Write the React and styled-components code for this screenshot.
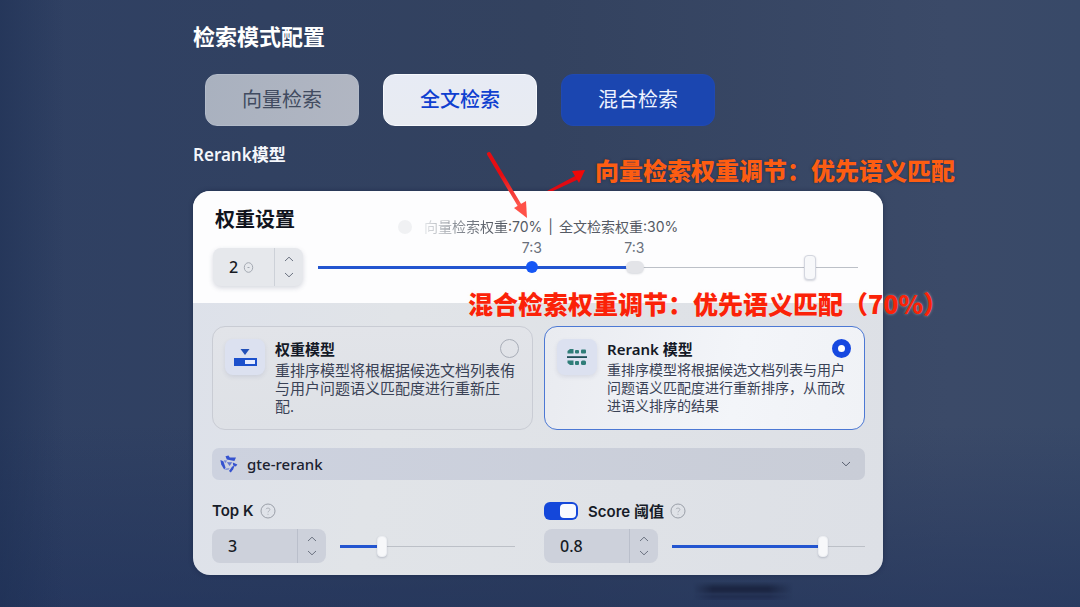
import React, { useState } from "react";
import styled, { createGlobalStyle, css } from "styled-components";

const GlobalStyle = createGlobalStyle`
  *, *::before, *::after { box-sizing: border-box; }
  body {
    margin: 0;
    min-height: 100vh;
    font-family: "Noto Sans", "Noto Sans CJK SC", sans-serif;
    color: #161c2b;
    background:
      linear-gradient(90deg, rgba(28, 46, 82, 0.5) 0, rgba(28, 46, 82, 0) 6%),
      linear-gradient(0deg, rgba(30, 48, 90, 0.55) 0, rgba(30, 48, 90, 0) 30%),
      linear-gradient(90deg, #2f4063 0%, #33425f 50%, #3b4a68 88%, #384968 100%);
  }
  button, input, select { font: inherit; color: inherit; margin: 0; }
  button { cursor: pointer; }
`;

const Page = styled.main`
  position: relative;
  min-height: 100vh;
  padding: 20px 197px 32px 193px;
`;

const PageTitle = styled.h1`
  margin: 0;
  font-size: 22px;
  line-height: 32px;
  font-weight: 700;
  color: #fff;
`;

const Tabs = styled.div`
  display: flex;
  gap: 24px;
  margin-top: 22px;
  padding-left: 12px;
`;

const tabLook = {
  muted: css`background: linear-gradient(100deg, #a9b1bf, #b1b6c2); color: #414b60; border-color: #b3bbc9;`,
  light: css`background: linear-gradient(180deg, #e7ebf5, #e8ebf1); color: #0f3fd0; border-color: #f6f8fc; font-weight: 500;`,
  primary: css`background: #1b46b0; color: #eef3ff; border-color: #2049b2;`,
};

const Tab = styled.button`
  width: 154px;
  height: 52px;
  padding: 0;
  border: 1px solid;
  border-radius: 12px;
  font-size: 20px;
  line-height: 28px;
  ${({ $look }) => tabLook[$look]}
`;

const SubTitle = styled.h2`
  margin: 16px 0 0;
  font-size: 17px;
  line-height: 26px;
  font-weight: 600;
  color: #f4f6fb;
`;

const Card = styled.section`
  position: relative;
  margin-top: 23px;
  border-radius: 17px;
  background: linear-gradient(100deg, #dde1ea 0%, #e1e4e8 30%, #dde0e6 100%);
  box-shadow: 0 0 4px rgba(18, 30, 60, 0.5);
`;

const Head = styled.div`
  display: grid;
  grid-template-columns: 90px 1fr;
  column-gap: 15px;
  padding: 12px 25px 17px 20px;
  border-radius: 17px 17px 0 0;
  background: #fdfdfe;
`;

const HeadLeft = styled.div`
  display: flex;
  flex-direction: column;
  gap: 11px;
`;

const CardTitle = styled.h3`
  margin: 0 0 0 2px;
  font-size: 20px;
  line-height: 34px;
  font-weight: 700;
  color: #10141d;
  white-space: nowrap;
`;

const HeadRight = styled.div`
  padding-top: 14px;
`;

const Caption = styled.p`
  display: flex;
  align-items: center;
  gap: 12px;
  margin: 0;
  padding-left: 80px;
  font-family: Inter, "Noto Sans CJK SC", sans-serif;
  font-size: 14px;
  line-height: 20px;
  color: #555a64;
  white-space: nowrap;

  &::before {
    content: "";
    width: 14px;
    height: 14px;
    border-radius: 50%;
    background: #f0f1f3;
  }
`;

const Faded = styled.span`
  color: transparent;
  background: linear-gradient(90deg, #e3e5e8 0, #8b9098 32px, #555a64 70px);
  background-clip: text;
`;

const Divider = styled.span`
  margin: 0 6px;
`;

const RatioTrack = styled.div`
  position: relative;
  display: flex;
  padding-top: 17px;
`;

const Mark = styled.span`
  position: absolute;
  top: 0;
  left: ${({ $at }) => $at}%;
  display: flex;
  flex-direction: column;
  align-items: center;
  gap: 2px;
  transform: translateX(-50%);
  font-family: Inter, sans-serif;
  font-size: 14px;
  line-height: 22px;
  color: #6a707b;

  &::after {
    content: "";
    width: ${({ $active }) => ($active ? 12 : 18)}px;
    height: 12px;
    border-radius: 6px;
    background: ${({ $active }) => ($active ? "#1657f5" : "#e3e4e8")};
    box-shadow: ${({ $active }) => ($active ? "none" : "0 1px 2px rgba(60, 70, 90, 0.2)")};
  }
`;

const thumb = css`
  width: ${({ $tall }) => ($tall ? 12 : 10)}px;
  height: ${({ $tall }) => ($tall ? 25 : 21)}px;
  border: 1px solid ${({ $tall }) => ($tall ? "#d3d6df" : "#eceef2")};
  border-radius: 4px;
  background: #f7f8fa;
  box-shadow: 0 1px 2px rgba(40, 50, 80, 0.2);
`;

const Range = styled.input`
  appearance: none;
  flex: 1;
  min-width: 0;
  width: 100%;
  height: 26px;
  background:
    linear-gradient(#2355d0, #2355d0) left center / ${({ $fill }) => $fill}% 3px no-repeat,
    linear-gradient(#bcc0c7, #bcc0c7) left center / 100% 1px no-repeat;

  &::-webkit-slider-thumb { appearance: none; ${thumb} }
  &::-moz-range-thumb { ${thumb} }
`;

const StepperBox = styled.div`
  display: flex;
  align-items: center;
  flex: none;
  width: ${({ $small }) => ($small ? 90 : 114)}px;
  height: ${({ $small }) => ($small ? 38 : 34)}px;
  border-radius: 8px;
  background: ${({ $small }) => ($small ? "#e6e8ec" : "#cdd1db")};
  box-shadow: ${({ $small }) => ($small ? "0 2px 5px rgba(60, 70, 100, 0.2)" : "none")};
  overflow: hidden;
`;

const NumberInput = styled.input`
  appearance: textfield;
  flex: ${({ $small }) => ($small ? "none" : "1")};
  width: ${({ $small }) => ($small ? 30 : 60)}px;
  min-width: 0;
  height: 100%;
  padding: 0 0 0 16px;
  border: 0;
  background: transparent;
  font-size: 16px;
  font-weight: 500;
  color: #171b24;

  &::-webkit-inner-spin-button,
  &::-webkit-outer-spin-button { appearance: none; margin: 0; }
`;

const Arrows = styled.div`
  display: flex;
  flex-direction: column;
  width: 29px;
  height: 100%;
  margin-left: auto;
  padding: 3px 0;
  border-left: 1px solid rgba(120, 128, 145, 0.22);
`;

const ArrowButton = styled.button`
  display: grid;
  place-items: center;
  flex: 1;
  padding: 0;
  border: 0;
  background: transparent;
  color: #6b7280;
`;

const Body = styled.div`
  padding: 23px 18px 12px 19px;
`;

const Models = styled.div`
  display: grid;
  grid-template-columns: 1fr 1fr;
  gap: 11px;
`;

const ModelCard = styled.label`
  display: flex;
  gap: 10px;
  height: 104px;
  padding: 12px 13px 0 12px;
  border: 1px solid ${({ $on }) => ($on ? "#4c78d4" : "#c9ccd4")};
  border-radius: 13px;
  background: ${({ $on }) =>
    $on ? "linear-gradient(100deg, #e9ebf0, #f3f5f9 60%, #f0f2f6)" : "linear-gradient(180deg, #e2e4e9, #dee1e6)"};
  cursor: pointer;
`;

const IconTile = styled.span`
  display: grid;
  place-items: center;
  flex: none;
  width: 40px;
  height: 36px;
  border-radius: 8px;
  background: #dce1f0;
  box-shadow: 0 2px 4px rgba(70, 80, 130, 0.12);
`;

const ModelText = styled.span`
  flex: 1;
  min-width: 0;
`;

const ModelHead = styled.span`
  display: flex;
  align-items: center;
  justify-content: space-between;
  height: 19px;
  font-size: 15px;
  font-weight: 600;
  color: #141926;
`;

const Radio = styled.input`
  appearance: none;
  width: 19px;
  height: 19px;
  border: 1px solid #a9aeb8;
  border-radius: 50%;
  background: transparent;

  &:checked { border: 6px solid #1648e0; background: #fff; }
`;

const ModelDesc = styled.span`
  display: block;
  margin-top: 3px;
  font-size: ${({ $size }) => $size}px;
  line-height: 18px;
  color: #3a4256;
  white-space: pre;
`;

const SelectWrap = styled.div`
  position: relative;
  margin-top: 18px;
`;

const SelectBox = styled.select`
  appearance: none;
  display: block;
  width: 100%;
  height: 32px;
  padding: 0 35px;
  border: 0;
  border-radius: 7px;
  background: linear-gradient(90deg, #cdd2df, #c9cdd7);
  font-size: 15px;
  font-weight: 500;
  color: #1c2230;
`;

const SelectIcon = styled.span`
  position: absolute;
  top: 0;
  bottom: 0;
  ${({ $end }) => ($end ? "right: 14px; color: #596070;" : "left: 8px;")}
  display: flex;
  align-items: center;
  pointer-events: none;
`;

const Fields = styled.div`
  display: grid;
  grid-template-columns: 1fr 1fr;
  gap: 11px;
  margin-top: 21px;
`;

const Field = styled.div`
  padding-right: ${({ $inset }) => ($inset ? 18 : 0)}px;
`;

const FieldHead = styled.div`
  display: flex;
  align-items: center;
  gap: 6px;
  height: 19px;
  color: #9a9fa8;
`;

const FieldLabel = styled.label`
  font-family: Inter, "Noto Sans CJK SC", sans-serif;
  font-size: 15px;
  font-weight: 600;
  color: #171c28;
`;

const FieldRow = styled.div`
  display: flex;
  align-items: center;
  gap: 14px;
  margin-top: 9px;
`;

const Toggle = styled.input`
  appearance: none;
  position: relative;
  width: 34px;
  height: 18px;
  margin-right: 4px;
  border-radius: 6px;
  background: #a4aab8;

  &::after {
    content: "";
    position: absolute;
    top: 2px;
    left: 2px;
    width: 16px;
    height: 14px;
    border-radius: 4px;
    background: #f8faff;
  }
  &:checked { background: #1447da; }
  &:checked::after { left: 16px; }
`;

const Note = styled.p`
  position: absolute;
  margin: 0;
  font-family: "Noto Sans CJK SC", sans-serif;
  font-weight: 900;
  line-height: 34px;
  white-space: nowrap;
  ${({ $tone }) =>
    $tone === "orange"
      ? "left: 402px; top: -38px; font-size: 24px; color: #fd5d12; text-shadow: 0 0 3px rgba(20, 30, 60, 0.6);"
      : "left: 275px; top: 95px; font-size: 25px; color: #fb2208; text-shadow: 0 0 3px rgba(255, 235, 215, 0.5);"}
`;

const ArrowLayer = styled.svg`
  position: absolute;
  left: 290px;
  top: -43px;
  pointer-events: none;
`;

const Smudge = styled.div`
  position: absolute;
  left: 500px;
  top: 391px;
  width: 100px;
  height: 18px;
  background: linear-gradient(180deg, transparent 0, #1a2440 35%, #1e2947 60%, #2d3d63 70%, #16213f 80%, #2d3d63 88%, #182344 100%);
  mask-image: linear-gradient(90deg, transparent, #000 20%, #000 75%, transparent);
  filter: blur(1px);
`;

const Chevron = ({ up }) => (
  <svg width="10" height="6" viewBox="0 0 10 6" fill="none" stroke="currentColor" strokeWidth="1" aria-hidden="true">
    <path d={up ? "M1 5 5 1.2 9 5" : "M1 1 5 4.8 9 1"} />
  </svg>
);

const HelpIcon = () => (
  <svg width="16" height="16" viewBox="0 0 16 16" fill="none" stroke="currentColor" strokeWidth="1" aria-hidden="true">
    <circle cx="8" cy="8" r="7" />
    <path d="M6 6.2c.3-1.6 3.9-1.6 3.9.3 0 1.300-1.900 1.400-1.900 2.900M8 10.800v1" opacity="0.7" />
  </svg>
);

const WeightIcon = () => (
  <svg width="24" height="20" viewBox="0 0 24 20" aria-hidden="true">
    <path d="M7.500 2h9L12 8z" fill="#2250b8" />
    <rect x="1" y="11" width="23" height="8" fill="#1c50cc" />
    <rect x="12" y="13" width="10" height="4" fill="#e6ecff" />
  </svg>
);

const RerankIcon = () => (
  <svg width="20" height="20" viewBox="0 0 20 20" fill="#2f7d78" aria-hidden="true">
    <path d="M.5 6.500V4L3 2h3.500v4.500z" />
    <rect x="8" y="3" width="4" height="3.500" rx="1" />
    <rect x="14" y="2.500" width="5" height="4" rx="1" />
    <rect x="0" y="9.200" width="20" height="1.800" fill="#1f4f58" />
    <path d="M.5 13.500h6V18H3L.5 16z" />
    <rect x="8" y="14" width="4" height="4" rx="1" />
    <rect x="14" y="13.500" width="5" height="4.500" rx="1.500" />
  </svg>
);

const GteIcon = () => (
  <svg width="18" height="18" viewBox="0 0 18 18" fill="#3552cf" aria-hidden="true">
    <path d="M5.500 1.200 8.500.6 9.800 2.400 16 2.600 14.400 6 6.800 4.400z" />
    <path d="M.4 5 3.400 6.200 5.600 12.800 4.200 14.600 1.200 9.500z" />
    <path d="M3.800 5.200 7.200 5.600 5.200 8.200z" opacity="0.6" />
    <path d="M6.800 7.200h5.400L9.600 11z" opacity="0.75" />
    <path d="M12.800 7.400 17.400 9.600 15.800 11.400 13.200 10.600z" />
    <path d="M14.600 10.800 13.200 14.200 10.800 17.400 9 15.900 12.200 11.600z" />
    <path d="M5.600 13.600 9.600 13 8.600 14.800 5.200 15z" opacity="0.5" />
  </svg>
);

function Stepper({ id, label, value, onChange, step = 1, small, children }) {
  const move = (d) => onChange(Number((Number(value) + d * step).toFixed(2)));
  return (
    <StepperBox $small={small}>
      <NumberInput
        id={id}
        type="number"
        step={step}
        aria-label={label}
        value={value}
        $small={small}
        onChange={(e) => onChange(e.target.value)}
      />
      {children}
      <Arrows>
        <ArrowButton type="button" aria-label="增加" onClick={() => move(1)}><Chevron up /></ArrowButton>
        <ArrowButton type="button" aria-label="减少" onClick={() => move(-1)}><Chevron /></ArrowButton>
      </Arrows>
    </StepperBox>
  );
}

const tabs = [
  { name: "向量检索", look: "muted" },
  { name: "全文检索", look: "light" },
  { name: "混合检索", look: "primary" },
];

const models = [
  {
    id: "weight",
    title: "权重模型",
    size: 15,
    icon: <WeightIcon />,
    desc: "重排序模型将根椐据候选文档列表侑\n与用户问题语义匹配度进行重新庄\n配.",
  },
  {
    id: "rerank",
    title: "Rerank 模型",
    size: 14,
    icon: <RerankIcon />,
    desc: "重排序模型将根据候选文档列表与用户\n问题语义匹配度进行重新排序，从而改\n进语义排序的结果",
  },
];

export default function App() {
  const [weight, setWeight] = useState(2);
  const [ratio, setRatio] = useState(92);
  const [model, setModel] = useState("rerank");
  const [topK, setTopK] = useState(3);
  const [score, setScore] = useState(0.8);
  const [scoreOn, setScoreOn] = useState(true);

  return (
    <>
      <GlobalStyle />
      <Page>
        <PageTitle>检索模式配置</PageTitle>
        <Tabs>
          {tabs.map((t) => (
            <Tab key={t.name} type="button" $look={t.look}>{t.name}</Tab>
          ))}
        </Tabs>
        <SubTitle>Rerank模型</SubTitle>

        <Card>
          <Head>
            <HeadLeft>
              <CardTitle>权重设置</CardTitle>
              <Stepper small label="权重" value={weight} onChange={setWeight}>
                <svg width="11" height="11" viewBox="0 0 11 11" fill="none" stroke="#a3a8b1" aria-hidden="true">
                  <ellipse cx="5.500" cy="5.500" rx="4.200" ry="4.800" />
                  <path d="M4.500 5.500h2" />
                </svg>
              </Stepper>
            </HeadLeft>
            <HeadRight>
              <Caption>
                <span>
                  <Faded>向量检索权重</Faded>:70%<Divider>|</Divider>全文检索权重:30%
                </span>
              </Caption>
              <RatioTrack>
                <Range
                  $tall
                  type="range"
                  aria-label="权重比例"
                  value={ratio}
                  $fill={58}
                  onChange={(e) => setRatio(Number(e.target.value))}
                />
                <Mark $at={39.6} $active>7:3</Mark>
                <Mark $at={58.6}>7:3</Mark>
              </RatioTrack>
            </HeadRight>
          </Head>

          <Body>
            <Models>
              {models.map((m) => (
                <ModelCard key={m.id} $on={model === m.id}>
                  <IconTile>{m.icon}</IconTile>
                  <ModelText>
                    <ModelHead>
                      {m.title}
                      <Radio type="radio" name="model" checked={model === m.id} onChange={() => setModel(m.id)} />
                    </ModelHead>
                    <ModelDesc $size={m.size}>{m.desc}</ModelDesc>
                  </ModelText>
                </ModelCard>
              ))}
            </Models>

            <SelectWrap>
              <SelectBox aria-label="Rerank模型">
                <option>gte-rerank</option>
              </SelectBox>
              <SelectIcon><GteIcon /></SelectIcon>
              <SelectIcon $end><Chevron /></SelectIcon>
            </SelectWrap>

            <Fields>
              <Field $inset>
                <FieldHead>
                  <FieldLabel htmlFor="top-k">Top K</FieldLabel>
                  <HelpIcon />
                </FieldHead>
                <FieldRow>
                  <Stepper id="top-k" value={topK} onChange={setTopK} />
                  <Range
                    type="range"
                    aria-label="Top K"
                    min="1"
                    max="10"
                    step="0.1"
                    value={topK}
                    $fill={((topK - 1) / 9) * 100}
                    onChange={(e) => setTopK(Number(e.target.value))}
                  />
                </FieldRow>
              </Field>
              <Field>
                <FieldHead>
                  <Toggle
                    id="score-on"
                    type="checkbox"
                    checked={scoreOn}
                    onChange={(e) => setScoreOn(e.target.checked)}
                  />
                  <FieldLabel htmlFor="score-on">Score 阈值</FieldLabel>
                  <HelpIcon />
                </FieldHead>
                <FieldRow>
                  <Stepper label="Score 阈值" step={0.1} value={score} onChange={setScore} />
                  <Range
                    type="range"
                    aria-label="Score 阈值"
                    min="0"
                    max="1"
                    step="0.1"
                    value={score}
                    $fill={score * 100}
                    onChange={(e) => setScore(Number(e.target.value))}
                  />
                </FieldRow>
              </Field>
            </Fields>
          </Body>

          <Smudge />
          <ArrowLayer width="110" height="76" viewBox="0 0 110 76" aria-hidden="true">
            <defs>
              <linearGradient id="fade" x1="0" y1="0" x2="0" y2="1">
                <stop offset="0.4" stopColor="#e60d12" />
                <stop offset="1" stopColor="#ff5a50" />
              </linearGradient>
            </defs>
            <path d="M6 6 37 58" stroke="url(#fade)" strokeWidth="4" strokeLinecap="round" />
            <path d="M31 60 43 53 44 70z" fill="#ff5148" />
            <path d="M64 43 70 43 96 31 94 27z" fill="#e00a12" />
            <path d="M89 23 102 22 96 35z" fill="#f00808" />
          </ArrowLayer>
          <Note $tone="orange">向量检索权重调节：优先语义匹配</Note>
          <Note $tone="red">混合检索权重调节：优先语义匹配（70%）</Note>
        </Card>
      </Page>
    </>
  );
}
